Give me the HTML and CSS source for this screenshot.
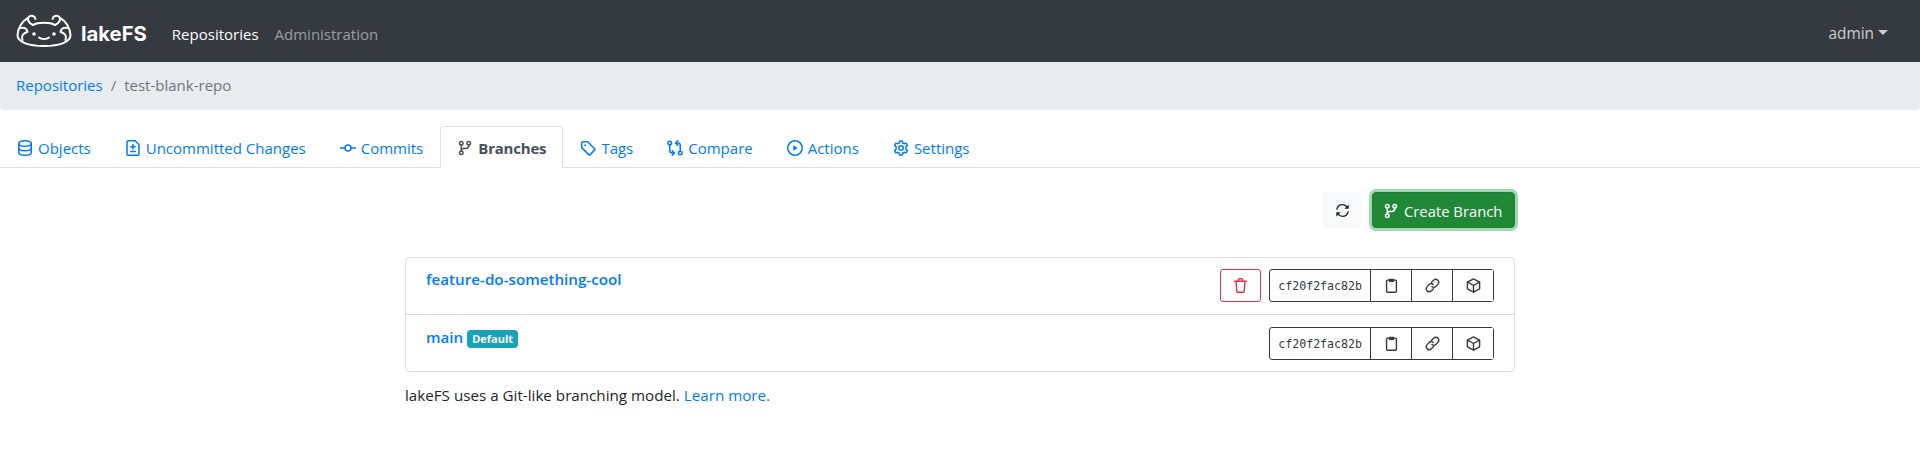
FILE: index.html
```html
<!DOCTYPE html>
<html lang="en">
<head>
    <meta charset="UTF-8">
    <title>lakeFS - Branches</title>
    <link rel="stylesheet" href="styles.css">
</head>
<body>
    <nav class="navbar">
        <a class="brand" href="#">
            <svg class="logo" width="56" height="34" viewBox="0 0 56 34" fill="none" stroke="#fff" stroke-width="2" stroke-linecap="round" stroke-linejoin="round">
                <path d="M12 4C6 7 2 14 1.500 21C1.500 28 12 32 28 32C44 32 54.500 28 54.500 21C54 14 50 7 44 4"/>
                <path d="M17 11C22 8 34 8 39 11"/>
                <path d="M17 11C12 9 11 5 13 2.500C15.500 1 19 2 19.500 5"/>
                <path d="M39 11C44 9 45 5 43 2.500C40.500 1 37 2 36.500 5"/>
                <path d="M5 14C9 13 11 15 11.500 18C7 19 5 22 6.500 26"/>
                <path d="M51 14C47 13 45 15 44.500 18C49 19 51 22 49.500 26"/>
                <path d="M23 23.500C25.500 25.500 30.500 25.500 33 23.500"/>
                <circle cx="18" cy="20" r="1.800" fill="#fff" stroke="none"/>
                <circle cx="38" cy="20" r="1.800" fill="#fff" stroke="none"/>
            </svg>
            <span class="brand-name">lakeFS</span>
        </a>
        <a class="nav-link active" href="#">Repositories</a>
        <a class="nav-link" href="#">Administration</a>
        <a class="nav-user" href="#">admin<span class="caret"></span></a>
    </nav>

    <div class="breadcrumb">
        <a href="#">Repositories</a>
        <span class="sep">/</span>
        <span class="crumb">test-blank-repo</span>
    </div>

    <ul class="tabs">
        <li><a href="#">
            <svg class="icon" viewBox="0 0 16 16"><ellipse cx="8" cy="3.500" rx="6.250" ry="2.750"/><path d="M1.750 3.500V12.500C1.750 14 4.500 15.250 8 15.250S14.250 14 14.250 12.500V3.500"/><path d="M1.750 8C1.750 9.500 4.500 10.750 8 10.750S14.250 9.500 14.250 8"/></svg>
            Objects</a></li>
        <li><a href="#">
            <svg class="icon" viewBox="0 0 16 16"><path d="M2 2C2 1.300 2.500 .750 3.250 .750H10L14 4.750V14.250C14 14.800 13.550 15.250 13 15.250H3C2.450 15.250 2 14.800 2 14.250Z"/><path d="M8 4.500V9M5.750 6.750H10.250M5.750 11.500H10.250"/></svg>
            Uncommitted Changes</a></li>
        <li><a href="#">
            <svg class="icon" viewBox="0 0 16 16"><circle cx="8" cy="8" r="3"/><path d="M0 8H5M11 8H16"/></svg>
            Commits</a></li>
        <li class="current"><a href="#">
            <svg class="icon" viewBox="0 0 16 16"><circle cx="4.250" cy="3.250" r="1.750"/><circle cx="11.750" cy="3.250" r="1.750"/><circle cx="4.250" cy="12.750" r="1.750"/><path d="M4.250 5V11M11.750 5V5.500C11.750 7.500 10.500 8.500 8.500 8.500H6.500C5 8.500 4.250 9.300 4.250 11"/></svg>
            Branches</a></li>
        <li><a href="#">
            <svg class="icon" viewBox="0 0 16 16"><path d="M1.750 2.750C1.750 2.200 2.200 1.750 2.750 1.750H7.600L14.600 8.750C15 9.150 15 9.750 14.600 10.150L10.150 14.600C9.750 15 9.150 15 8.750 14.600L1.750 7.600Z"/><circle cx="5.250" cy="5.250" r="1" fill="currentColor" stroke="none"/></svg>
            Tags</a></li>
        <li><a href="#">
            <svg class="icon" viewBox="0 0 16 16"><circle cx="2.750" cy="3" r="1.750"/><circle cx="13.250" cy="13" r="1.750"/><path d="M2.750 4.750V10.500C2.750 12 3.750 13 5.250 13H7M5.250 10.750L7.500 13L5.250 15.250"/><path d="M13.250 11.250V5.500C13.250 4 12.250 3 10.750 3H9M10.750 .750L8.500 3L10.750 5.250"/></svg>
            Compare</a></li>
        <li><a href="#">
            <svg class="icon" viewBox="0 0 16 16"><circle cx="8" cy="8" r="7.250"/><path class="solid" d="M6.250 5.250L10.750 8L6.250 10.750Z"/></svg>
            Actions</a></li>
        <li><a href="#">
            <svg class="icon" viewBox="0 0 16 16"><path d="M6.700 1H9.300L9.800 3C10.300 3.200 10.700 3.400 11.100 3.700L13.100 3.100L14.400 5.400L12.900 6.800C13 7.300 13 8.700 12.900 9.200L14.400 10.600L13.100 12.900L11.100 12.300C10.700 12.600 10.300 12.800 9.800 13L9.300 15H6.700L6.200 13C5.700 12.800 5.300 12.600 4.900 12.300L2.900 12.900L1.600 10.600L3.100 9.200C3 8.700 3 7.300 3.100 6.800L1.600 5.400L2.900 3.100L4.900 3.700C5.300 3.400 5.700 3.200 6.200 3Z"/><circle cx="8" cy="8" r="2.250"/></svg>
            Settings</a></li>
    </ul>

    <main class="container">
        <div class="actions">
            <button class="btn-refresh" type="button">
                <svg class="icon icon-sm" viewBox="0 0 16 16"><path d="M2 6.500C2.700 3.800 5 1.750 8 1.750C10.200 1.750 11.800 2.800 13.250 4.750M14 9.500C13.300 12.200 11 14.250 8 14.250C5.800 14.250 4.200 13.200 2.750 11.250"/><path class="solid" d="M14.600 1.500V6.200H9.900Z"/><path class="solid" d="M1.400 14.500V9.800H6.100Z"/></svg>
            </button>
            <button class="btn-create" type="button">
                <svg class="icon" viewBox="0 0 16 16"><circle cx="4.250" cy="3.250" r="1.750"/><circle cx="11.750" cy="3.250" r="1.750"/><circle cx="4.250" cy="12.750" r="1.750"/><path d="M4.250 5V11M11.750 5V5.500C11.750 7.500 10.500 8.500 8.500 8.500H6.500C5 8.500 4.250 9.300 4.250 11"/></svg>
                Create Branch
            </button>
        </div>

        <div class="card">
            <div class="row">
                <a class="branch-name" href="#">feature-do-something-cool</a>
                <div class="row-actions">
                    <button class="btn-delete" type="button">
                        <svg class="icon icon-sm" viewBox="0 0 16 16"><path d="M1.750 3.500H14.250M5.750 3.500V1.750C5.750 1.200 6.200 .750 6.750 .750H9.250C9.800 .750 10.250 1.200 10.250 1.750V3.500M3.250 3.500L4 14C4 14.700 4.500 15.250 5.250 15.250H10.750C11.500 15.250 12 14.700 12 14L12.750 3.500"/></svg>
                    </button>
                    <div class="ref-group">
                        <code class="ref-id">cf20f2fac82b</code>
                        <button type="button"><svg class="icon icon-sm" viewBox="0 0 16 16"><rect x="2.750" y="2.250" width="10.500" height="13" rx="1"/><rect x="5.250" y=".750" width="5.500" height="3.500" rx=".500" class="solid"/></svg></button>
                        <button type="button"><svg class="icon icon-sm" viewBox="0 0 16 16"><path d="M7 4.500L9.200 2.300C10.400 1.100 12.300 1.100 13.700 2.300C14.900 3.700 14.900 5.600 13.700 6.800L11.500 9C10.300 10.200 8.600 10.200 7.400 9"/><path d="M9 11.500L6.800 13.700C5.600 14.900 3.700 14.900 2.300 13.700C1.100 12.300 1.100 10.400 2.300 9.200L4.500 7C5.700 5.800 7.400 5.800 8.600 7"/></svg></button>
                        <button type="button"><svg class="icon icon-sm" viewBox="0 0 16 16"><path d="M8 .900L14.500 4.300V11.700L8 15.100L1.500 11.700V4.300Z"/><path d="M1.700 4.400L8 8L14.300 4.400M8 8V15"/></svg></button>
                    </div>
                </div>
            </div>
            <div class="row">
                <div>
                    <a class="branch-name" href="#">main</a>
                    <span class="badge">Default</span>
                </div>
                <div class="row-actions">
                    <div class="ref-group">
                        <code class="ref-id">cf20f2fac82b</code>
                        <button type="button"><svg class="icon icon-sm" viewBox="0 0 16 16"><rect x="2.750" y="2.250" width="10.500" height="13" rx="1"/><rect x="5.250" y=".750" width="5.500" height="3.500" rx=".500" class="solid"/></svg></button>
                        <button type="button"><svg class="icon icon-sm" viewBox="0 0 16 16"><path d="M7 4.500L9.200 2.300C10.400 1.100 12.300 1.100 13.700 2.300C14.900 3.700 14.900 5.600 13.700 6.800L11.500 9C10.300 10.200 8.600 10.200 7.400 9"/><path d="M9 11.500L6.800 13.700C5.600 14.900 3.700 14.900 2.300 13.700C1.100 12.300 1.100 10.400 2.300 9.200L4.500 7C5.700 5.800 7.400 5.800 8.600 7"/></svg></button>
                        <button type="button"><svg class="icon icon-sm" viewBox="0 0 16 16"><path d="M8 .900L14.500 4.300V11.700L8 15.100L1.500 11.700V4.300Z"/><path d="M1.700 4.400L8 8L14.300 4.400M8 8V15"/></svg></button>
                    </div>
                </div>
            </div>
        </div>

        <p class="help">lakeFS uses a Git-like branching model. <a href="#">Learn more.</a></p>
    </main>
</body>
</html>
```

FILE: styles.css
```css
body {
    margin: 0;
    font-family: "Open Sans", "Liberation Sans", sans-serif;
    font-size: 15.2px;
    line-height: 24px;
    color: #212529;
    background-color: #fff;
}
a {
    color: #007bff;
    text-decoration: none;
}
.icon {
    width: 16px;
    height: 16px;
    fill: none;
    stroke: currentColor;
    stroke-width: 1.5;
    stroke-linecap: round;
    stroke-linejoin: round;
    flex-shrink: 0;
}
.icon-sm {
    width: 15px;
    height: 15px;
}
.icon .solid {
    fill: currentColor;
    stroke: none;
}
.navbar {
    display: flex;
    align-items: center;
    height: 62px;
    padding: 0 32px 0 16px;
    box-sizing: border-box;
    background-color: #343a40;
}
.brand {
    display: flex;
    align-items: center;
    gap: 9px;
    margin-right: 17px;
    color: #fff;
}
.brand-name {
    font-family: Inter, sans-serif;
    font-size: 20.3px;
    font-weight: 700;
    padding-top: 6px;
}
.nav-link {
    padding: 11px 8px 5px;
    font-size: 15px;
    color: rgba(255, 255, 255, 0.5);
}
.nav-link.active {
    color: #fff;
}
.nav-user {
    margin-left: auto;
    padding-top: 6px;
    display: flex;
    align-items: center;
    font-size: 15.4px;
    color: rgba(255, 255, 255, 0.75);
}
.caret {
    margin-left: 4px;
    margin-top: -3px;
    border-top: 5px solid;
    border-left: 5px solid transparent;
    border-right: 5px solid transparent;
}
.breadcrumb {
    display: flex;
    align-items: center;
    height: 48px;
    padding: 0 16px 2px;
    box-sizing: border-box;
    font-size: 15px;
    background-color: #e9ecef;
    border-radius: 0 0 4px 4px;
}
.sep {
    padding: 0 8px;
    color: #6c757d;
}
.crumb {
    color: #6c757d;
}
.tabs {
    display: flex;
    list-style: none;
    margin: 16px 0 0;
    padding: 0;
    font-size: 15px;
    border-bottom: 1px solid #dee2e6;
}
.tabs a {
    display: flex;
    align-items: center;
    gap: 5px;
    padding: 9px 16px 7px;
    border: 1px solid transparent;
    border-radius: 4px 4px 0 0;
    margin-bottom: -1px;
}
.tabs .current a {
    color: #495057;
    font-weight: 700;
    letter-spacing: -0.2px;
    background-color: #fff;
    border-color: #dee2e6 #dee2e6 #fff;
}
.container {
    width: 1110px;
    margin: 0 auto;
}
.actions {
    display: flex;
    justify-content: flex-end;
    gap: 10px;
    margin-top: 24px;
}
button {
    font: inherit;
    cursor: pointer;
}
.btn-refresh {
    display: flex;
    align-items: center;
    justify-content: center;
    width: 40px;
    height: 36px;
    padding: 0;
    color: #212529;
    background-color: #f8f9fa;
    border: 1px solid #f8f9fa;
    border-radius: 4px;
}
.btn-create {
    display: flex;
    align-items: center;
    gap: 5px;
    box-sizing: border-box;
    width: 143px;
    height: 36px;
    padding: 1px 0 0 10px;
    font-size: 14.8px;
    white-space: nowrap;
    color: #fff;
    background-color: #218838;
    border: 1px solid #1e7e34;
    border-radius: 4px;
    box-shadow: 0 0 0 3px rgba(72, 180, 97, 0.5);
}
.card {
    margin-top: 29px;
    border: 1px solid #dfdfdf;
    border-radius: 4px;
}
.row {
    display: flex;
    justify-content: space-between;
    align-items: flex-start;
    height: 56px;
    padding: 9px 20px 0;
    box-sizing: border-box;
}
.row + .row {
    height: 57px;
    padding-top: 10px;
    border-top: 1px solid #dfdfdf;
}
.branch-name {
    font-weight: 600;
}
.badge {
    display: inline-block;
    padding: 3px 5px;
    font-size: 11px;
    font-weight: 700;
    line-height: 12px;
    color: #fff;
    background-color: #17a2b8;
    border-radius: 4px;
}
.row-actions {
    display: flex;
    gap: 8px;
    margin-top: 2px;
}
.btn-delete {
    display: flex;
    align-items: center;
    justify-content: center;
    width: 41px;
    height: 33px;
    padding: 0;
    color: #dc3545;
    background: #fff;
    border: 1px solid #dc3545;
    border-radius: 3px;
}
.ref-group {
    display: flex;
    height: 31px;
    border: 1px solid #343a40;
    border-radius: 3px;
}
.ref-id {
    display: flex;
    align-items: center;
    padding: 0 8px;
    font-family: "DejaVu Sans Mono", monospace;
    font-size: 11.6px;
    color: #343a40;
}
.ref-group button {
    display: flex;
    align-items: center;
    justify-content: center;
    width: 41px;
    padding: 0;
    color: #343a40;
    background: #fff;
    border: 0;
    border-left: 1px solid #343a40;
}
.help {
    margin: 11px 0 0;
}
```
